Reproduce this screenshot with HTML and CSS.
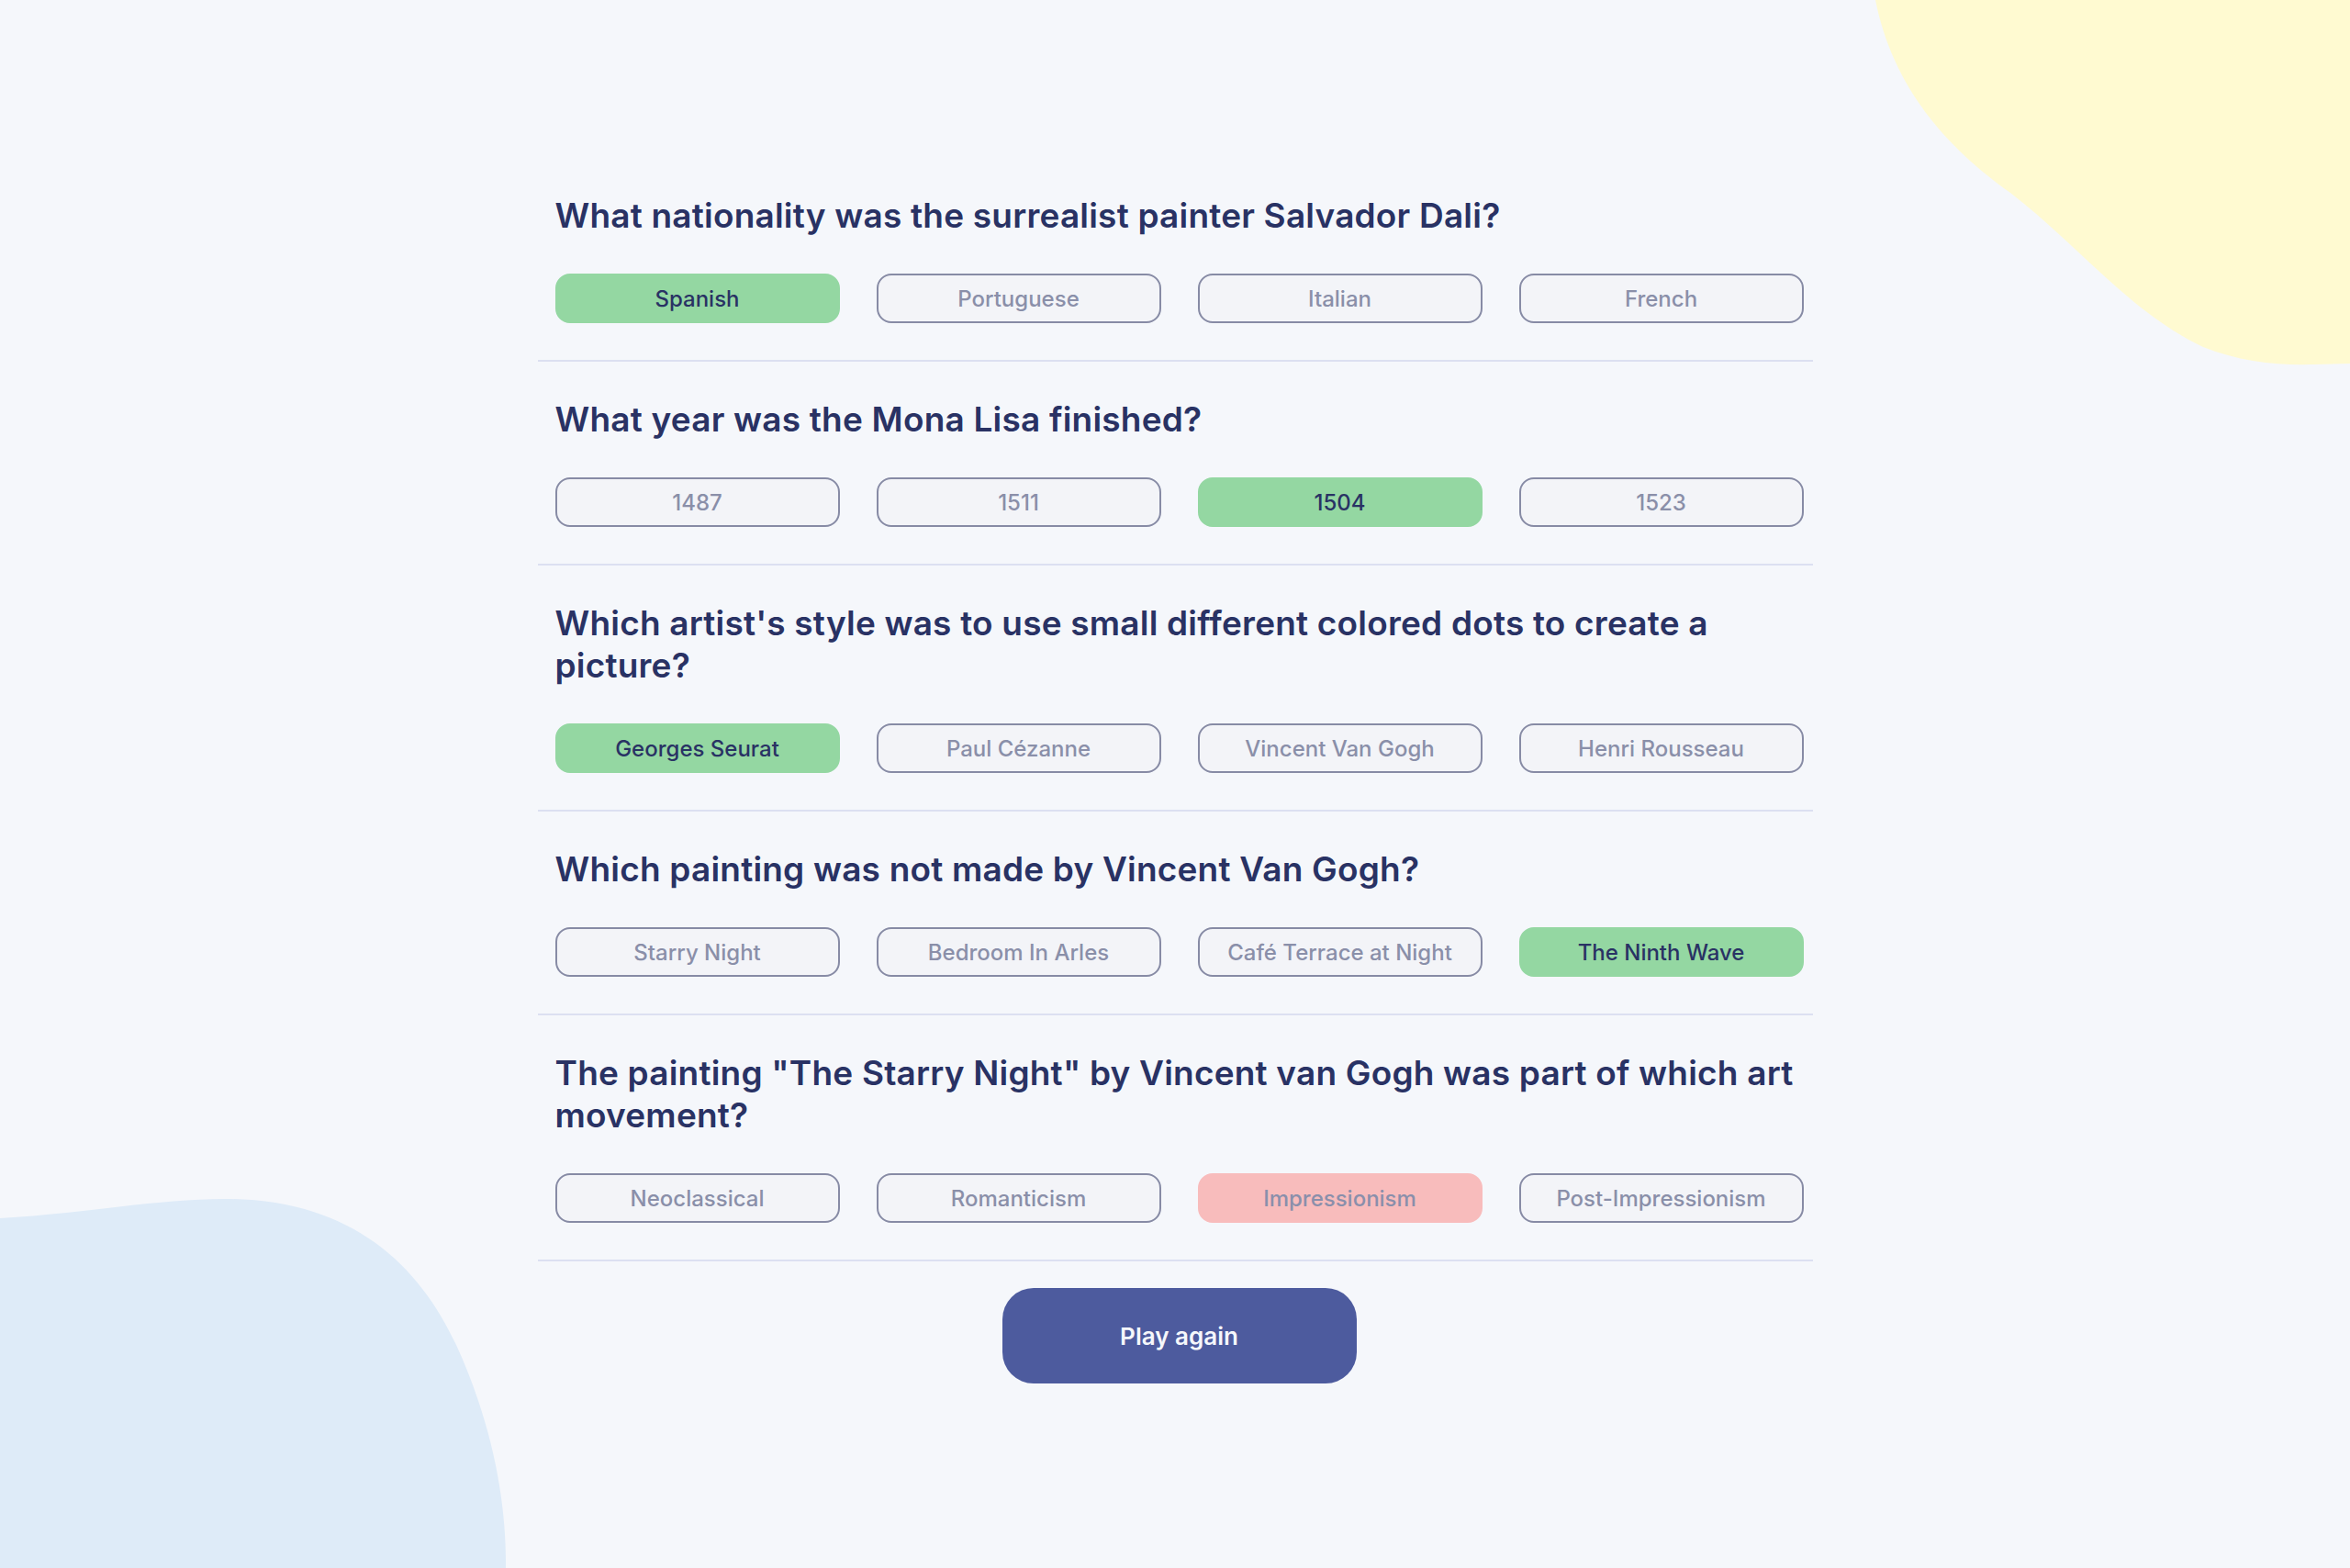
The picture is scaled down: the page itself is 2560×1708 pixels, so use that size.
FILE: index.html
```html
<!DOCTYPE html>
<html lang="en">
<head>
<meta charset="utf-8">
<title>Quizzical</title>
<link rel="stylesheet" href="styles.css">
</head>
<body>
<svg class="blob" width="2560" height="1708" viewBox="0 0 2560 1708" aria-hidden="true">
  <path d="M2043,0 C2062,95 2120,160 2190,210 C2265,268 2320,340 2400,378 C2440,394 2480,398 2520,397 L2560,396 L2560,0 Z" fill="#FFFAD1"/>
  <path d="M0,1327 C100,1321 170,1306 245,1306 C380,1306 455,1375 497,1465 C538,1555 552,1640 551,1708 L0,1708 Z" fill="#DEEBF8"/>
</svg>
<main class="quiz">
  <section class="question">
    <h2 class="question-title">What nationality was the surrealist painter Salvador Dali?</h2>
    <div class="answers">
      <button class="answer correct">Spanish</button>
      <button class="answer">Portuguese</button>
      <button class="answer">Italian</button>
      <button class="answer">French</button>
    </div>
  </section>
  <section class="question">
    <h2 class="question-title">What year was the Mona Lisa finished?</h2>
    <div class="answers">
      <button class="answer">1487</button>
      <button class="answer">1511</button>
      <button class="answer correct">1504</button>
      <button class="answer">1523</button>
    </div>
  </section>
  <section class="question">
    <h2 class="question-title">Which artist's style was to use small different colored dots to create a picture?</h2>
    <div class="answers">
      <button class="answer correct">Georges Seurat</button>
      <button class="answer">Paul Cézanne</button>
      <button class="answer">Vincent Van Gogh</button>
      <button class="answer">Henri Rousseau</button>
    </div>
  </section>
  <section class="question">
    <h2 class="question-title">Which painting was not made by Vincent Van Gogh?</h2>
    <div class="answers">
      <button class="answer">Starry Night</button>
      <button class="answer">Bedroom In Arles</button>
      <button class="answer">Café Terrace at Night</button>
      <button class="answer correct">The Ninth Wave</button>
    </div>
  </section>
  <section class="question">
    <h2 class="question-title">The painting "The Starry Night" by Vincent van Gogh was part of which art movement?</h2>
    <div class="answers">
      <button class="answer">Neoclassical</button>
      <button class="answer">Romanticism</button>
      <button class="answer wrong">Impressionism</button>
      <button class="answer">Post-Impressionism</button>
    </div>
  </section>
  <div class="footer">
    <button class="play-again">Play again</button>
  </div>
</main>
</body>
</html>
```

FILE: styles.css
```css
* {
  box-sizing: border-box;
}

html, body {
  margin: 0;
  padding: 0;
}

body {
  background: #F5F7FB;
  font-family: Inter, "Noto Sans", sans-serif;
  color: #293264;
  min-height: 1708px;
  position: relative;
  overflow: hidden;
}

.blob {
  position: absolute;
  top: 0;
  left: 0;
  z-index: 0;
}

.quiz {
  position: relative;
  z-index: 1;
  width: 1389px;
  margin: 0 auto;
  padding-top: 172px;
  display: flex;
  flex-direction: column;
}

.question {
  padding: 40px 10px 40px 19px;
  border-bottom: 2px solid #DCE0F1;
  display: flex;
  flex-direction: column;
  gap: 40px;
}

.question-title {
  margin: 0;
  font-size: 37px;
  line-height: 46px;
  font-weight: 600;
  letter-spacing: 0.2px;
  color: #293264;
}

.answers {
  display: grid;
  grid-template-columns: repeat(4, 310px);
  column-gap: 40px;
}

.answer {
  height: 54px;
  border: 2px solid #878BA5;
  border-radius: 16px;
  background: #F3F4F8;
  color: #8A8FA9;
  font-family: Inter, "Noto Sans", sans-serif;
  font-size: 24px;
  font-weight: 500;
  padding: 0;
  cursor: pointer;
}

.answer.correct {
  background: #94D7A2;
  border-color: #94D7A2;
  color: #293264;
}

.answer.wrong {
  background: #F8BCBC;
  border-color: #F8BCBC;
  color: #8A8FAB;
}

.footer {
  display: flex;
  justify-content: center;
  padding: 29px 10px 0 19px;
}

.play-again {
  width: 386px;
  height: 104px;
  border: none;
  border-radius: 34px;
  background: #4D5B9E;
  color: #F5F7FB;
  font-family: Inter, "Noto Sans", sans-serif;
  font-size: 26px;
  font-weight: 600;
  cursor: pointer;
}
```
